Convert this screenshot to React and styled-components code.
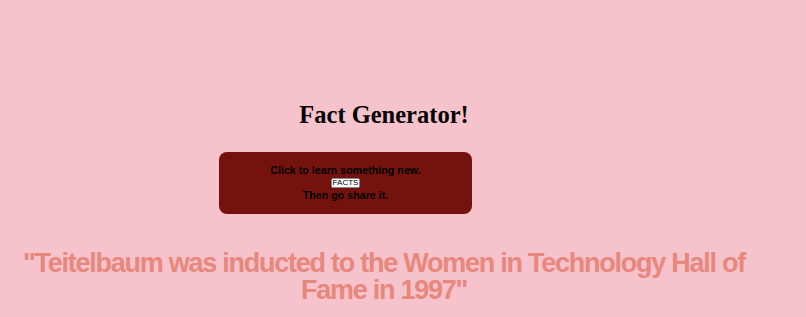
import React from "react"
import styled, { createGlobalStyle } from "styled-components"

const GlobalStyle = createGlobalStyle`
  html, body {
    margin: 0;
    background-color: #f6c2cb;
  }
  body {
    padding: 8px;
    font-family: "Liberation Serif", "Times New Roman", serif;
  }
`

const Page = styled.div`
  width: 752px;
`

const Title = styled.h1`
  margin: 92px 0 0;
  text-align: center;
  font-size: 24.5px;
  font-weight: 700;
  line-height: 30px;
  color: #000;
`

const Card = styled.div`
  margin: 22px 0 0 211px;
  width: 253px;
  height: 62px;
  box-sizing: border-box;
  padding-top: 12px;
  border-radius: 8px;
  background-color: #74130e;
  display: flex;
  flex-direction: column;
  align-items: center;
  gap: 1px;
  font-family: "Liberation Sans", Arial, sans-serif;
  font-weight: 700;
  font-size: 10.7px;
  line-height: 13px;
  color: #000;
`

const FactButton = styled.button`
  margin: 0;
  padding: 0 1px;
  height: 10px;
  font-family: "Liberation Sans", Arial, sans-serif;
  font-size: 8px;
  line-height: 8px;
  background: #fff;
  color: #000;
  border: 1px solid #888;
  border-radius: 2px;
`

const Quote = styled.p`
  margin: 36px 0 0;
  text-align: center;
  font-family: "Liberation Sans", Arial, sans-serif;
  font-weight: 700;
  font-size: 27px;
  letter-spacing: -1.25px;
  line-height: 27px;
  color: #e8877c;
`

const App = () => (
  <>
    <GlobalStyle />
    <Page>
      <Title>Fact Generator!</Title>
      <Card>
        <span>Click to learn something new.</span>
        <FactButton>FACTS</FactButton>
        <span>Then go share it.</span>
      </Card>
      <Quote>"Teitelbaum was inducted to the Women in Technology Hall of Fame in 1997"</Quote>
    </Page>
  </>
)

export default App
